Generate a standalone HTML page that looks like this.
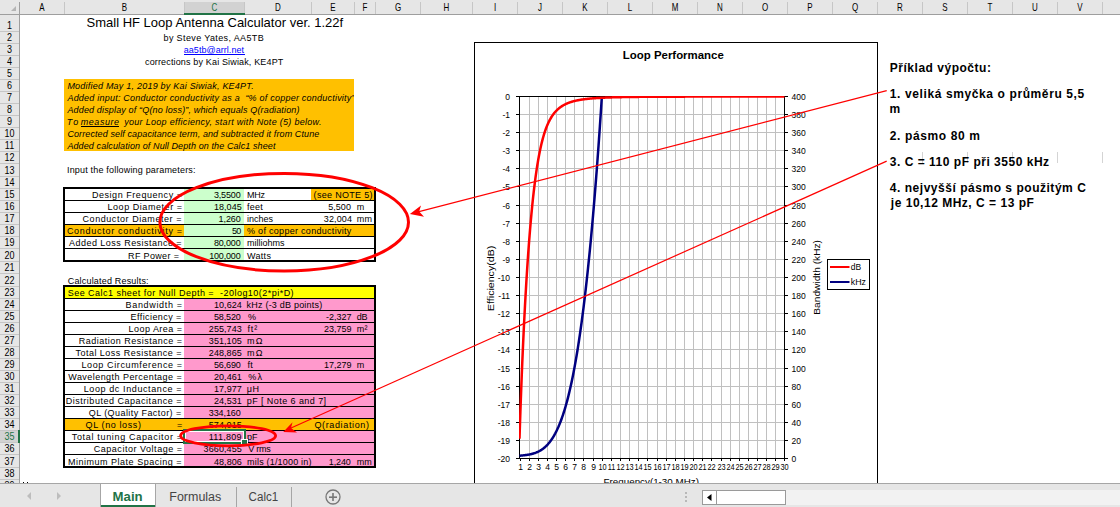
<!DOCTYPE html>
<html><head><meta charset="utf-8"><style>
html,body{margin:0;padding:0;}
body{width:1120px;height:507px;overflow:hidden;position:relative;background:#fff;font-family:"Liberation Sans",sans-serif;}
svg{position:absolute;left:0;top:0;}
svg text{font-family:"Liberation Sans",sans-serif;white-space:pre;}
#tabs{position:absolute;left:0;top:483px;width:1120px;height:24px;background:#E6E6E6;border-top:1px solid #A6A6A6;box-sizing:border-box;}
</style></head><body>
<svg width="1120" height="507" viewBox="0 0 1120 507">
<rect x="64" y="79" width="290" height="72" fill="#FFC000"/>
<rect x="184" y="188" width="60" height="73" fill="#CCFFCC"/>
<rect x="311" y="188" width="64" height="12" fill="#FFC000"/>
<rect x="64" y="224" width="120" height="12" fill="#FFC000"/>
<rect x="244" y="224" width="131" height="12" fill="#FFC000"/>
<rect x="64" y="286" width="311" height="12" fill="#FFFF00"/>
<rect x="184" y="298" width="191" height="169" fill="#FF99CC"/>
<rect x="64" y="418" width="311" height="12" fill="#FFC000"/>
<rect x="63" y="200" width="313" height="1" fill="#000"/>
<rect x="63" y="212" width="313" height="1" fill="#000"/>
<rect x="63" y="224" width="313" height="1" fill="#000"/>
<rect x="63" y="236" width="313" height="1" fill="#000"/>
<rect x="63" y="248" width="313" height="1" fill="#000"/>
<rect x="63" y="187" width="313" height="2" fill="#000"/>
<rect x="63" y="260" width="313" height="2" fill="#000"/>
<rect x="63" y="187" width="2" height="75" fill="#000"/>
<rect x="374" y="187" width="2" height="75" fill="#000"/>
<rect x="63" y="298" width="313" height="1" fill="#000"/>
<rect x="63" y="310" width="313" height="1" fill="#000"/>
<rect x="63" y="322" width="313" height="1" fill="#000"/>
<rect x="63" y="334" width="313" height="1" fill="#000"/>
<rect x="63" y="346" width="313" height="1" fill="#000"/>
<rect x="63" y="358" width="313" height="1" fill="#000"/>
<rect x="63" y="370" width="313" height="1" fill="#000"/>
<rect x="63" y="382" width="313" height="1" fill="#000"/>
<rect x="63" y="394" width="313" height="1" fill="#000"/>
<rect x="63" y="406" width="313" height="1" fill="#000"/>
<rect x="63" y="418" width="313" height="1" fill="#000"/>
<rect x="63" y="430" width="313" height="1" fill="#000"/>
<rect x="63" y="442" width="313" height="1" fill="#000"/>
<rect x="63" y="454" width="313" height="1" fill="#000"/>
<rect x="63" y="285" width="313" height="2" fill="#000"/>
<rect x="63" y="466" width="313" height="2" fill="#000"/>
<rect x="63" y="285" width="2" height="183" fill="#000"/>
<rect x="374" y="285" width="2" height="183" fill="#000"/>
<text x="86.5" y="27.3" font-size="13" textLength="256.7" lengthAdjust="spacing" fill="#000">Small HF Loop Antenna Calculator ver. 1.22f</text>
<text x="163.5" y="41" font-size="9" textLength="100.2" lengthAdjust="spacing" fill="#000">by Steve Yates, AA5TB</text>
<text x="183.75" y="53" font-size="9" textLength="60.3" lengthAdjust="spacing" fill="#0000FF">aa5tb@arrl.net</text>
<rect x="184" y="54" width="61" height="1" fill="#0000FF"/>
<text x="145" y="65" font-size="9" textLength="138.3" lengthAdjust="spacing" fill="#000">corrections by Kai Siwiak, KE4PT</text>
<clipPath id="oc"><rect x="64" y="79" width="290" height="72"/></clipPath><g clip-path="url(#oc)">
<text x="67.4" y="88.5" font-size="9" textLength="186.3" lengthAdjust="spacing" font-style="italic" fill="#000">Modified May 1, 2019 by Kai Siwiak, KE4PT.</text>
<text x="67.4" y="100.5" font-size="9" textLength="287.1" lengthAdjust="spacing" font-style="italic" fill="#000">Added input: Conductor conductivity as a  “% of copper conductivity”</text>
<text x="67.4" y="112.5" font-size="9" textLength="232.1" lengthAdjust="spacing" font-style="italic" fill="#000">Added display of “Q(no loss)”, which equals Q(radiation)</text>
<text x="66.8" y="124.5" font-size="9" textLength="11.4" lengthAdjust="spacing" font-style="italic" fill="#000">To</text>
<text x="80.8" y="124.5" font-size="9" textLength="38.2" lengthAdjust="spacing" font-style="italic" fill="#000">measure</text>
<text x="124.2" y="124.5" font-size="9" textLength="197.2" lengthAdjust="spacing" font-style="italic" fill="#000">your Loop efficiency, start with Note (5) below.</text>
<text x="67.4" y="136.5" font-size="9" textLength="251.9" lengthAdjust="spacing" font-style="italic" fill="#000">Corrected self capacitance term, and subtracted it from Ctune</text>
<text x="67.4" y="148.5" font-size="9" textLength="208.0" lengthAdjust="spacing" font-style="italic" fill="#000">Added calculation of Null Depth on the Calc1 sheet</text>
</g>
<rect x="81" y="126" width="38" height="1" fill="#000"/>
<text x="67" y="173" font-size="9" textLength="128.5" lengthAdjust="spacing" fill="#000">Input the following parameters:</text>
<text x="91.9" y="198" font-size="9" textLength="90.1" lengthAdjust="spacing" fill="#000">Design Frequency =</text>
<text x="107.5" y="210" font-size="9" textLength="74.5" lengthAdjust="spacing" fill="#000">Loop Diameter =</text>
<text x="82.5" y="222" font-size="9" textLength="99.0" lengthAdjust="spacing" fill="#000">Conductor Diameter =</text>
<text x="66.9" y="234" font-size="9" textLength="115.2" lengthAdjust="spacing" fill="#000">Conductor conductivity =</text>
<text x="69" y="246" font-size="9" textLength="112.6" lengthAdjust="spacing" fill="#000">Added Loss Resistance =</text>
<text x="128.1" y="259" font-size="9" textLength="50.8" lengthAdjust="spacing" fill="#000">RF Power =</text>
<text x="213.9" y="198" font-size="9" textLength="26.8" lengthAdjust="spacing" fill="#000">3,5500</text>
<text x="213.9" y="210" font-size="9" textLength="27.8" lengthAdjust="spacing" fill="#000">18,045</text>
<text x="218.6" y="222" font-size="9" textLength="22.1" lengthAdjust="spacing" fill="#000">1,260</text>
<text x="232" y="234" font-size="9" textLength="9.2" lengthAdjust="spacing" fill="#000">50</text>
<text x="213.9" y="246" font-size="9" textLength="26.8" lengthAdjust="spacing" fill="#000">80,000</text>
<text x="209.2" y="259" font-size="9" textLength="31.5" lengthAdjust="spacing" fill="#000">100,000</text>
<text x="247" y="198" font-size="9" textLength="17.9" lengthAdjust="spacing" fill="#000">MHz</text>
<text x="247" y="210" font-size="9" textLength="15.8" lengthAdjust="spacing" fill="#000">feet</text>
<text x="247" y="222" font-size="9" textLength="26.0" lengthAdjust="spacing" fill="#000">inches</text>
<text x="247" y="234" font-size="9" textLength="104.3" lengthAdjust="spacing" fill="#000">% of copper conductivity</text>
<text x="247" y="246" font-size="9" textLength="37.4" lengthAdjust="spacing" fill="#000">milliohms</text>
<text x="247" y="259" font-size="9" textLength="23.9" lengthAdjust="spacing" fill="#000">Watts</text>
<text x="313.6" y="198" font-size="9" textLength="58.9" lengthAdjust="spacing" fill="#000">(see NOTE 5)</text>
<text x="328.2" y="210" font-size="9" textLength="22.7" lengthAdjust="spacing" fill="#000">5,500</text>
<text x="356.8" y="210" font-size="9" fill="#000">m</text>
<text x="323.75" y="222" font-size="9" textLength="28.2" lengthAdjust="spacing" fill="#000">32,004</text>
<text x="356.8" y="222" font-size="9" textLength="15.2" lengthAdjust="spacing" fill="#000">mm</text>
<text x="67.7" y="284" font-size="9" textLength="80.9" lengthAdjust="spacing" fill="#000">Calculated Results:</text>
<text x="67.7" y="296" font-size="9" textLength="225.9" lengthAdjust="spacing" fill="#000">See Calc1 sheet for Null Depth =  -20log10(2*pi*D)</text>
<text x="125.6" y="308" font-size="9" textLength="56.4" lengthAdjust="spacing" fill="#000">Bandwidth =</text>
<text x="130.6" y="320" font-size="9" textLength="50.7" lengthAdjust="spacing" fill="#000">Efficiency =</text>
<text x="128.5" y="332" font-size="9" textLength="53.5" lengthAdjust="spacing" fill="#000">Loop Area =</text>
<text x="78.75" y="344" font-size="9" textLength="103.3" lengthAdjust="spacing" fill="#000">Radiation Resistance =</text>
<text x="75.4" y="356" font-size="9" textLength="106.1" lengthAdjust="spacing" fill="#000">Total Loss Resistance =</text>
<text x="81.5" y="368" font-size="9" textLength="100.5" lengthAdjust="spacing" fill="#000">Loop Circumference =</text>
<text x="68.3" y="380" font-size="9" textLength="113.4" lengthAdjust="spacing" fill="#000">Wavelength Percentage =</text>
<text x="83.7" y="392" font-size="9" textLength="97.8" lengthAdjust="spacing" fill="#000">Loop dc Inductance =</text>
<text x="65.8" y="404" font-size="9" textLength="115.7" lengthAdjust="spacing" fill="#000">Distributed Capacitance =</text>
<text x="88.75" y="416" font-size="9" textLength="92.4" lengthAdjust="spacing" fill="#000">QL (Quality Factor) =</text>
<text x="71.75" y="440" font-size="9" textLength="110.3" lengthAdjust="spacing" fill="#000">Total tuning Capacitor =</text>
<text x="93.75" y="452" font-size="9" textLength="88.3" lengthAdjust="spacing" fill="#000">Capacitor Voltage =</text>
<text x="68" y="465" font-size="9" textLength="113.5" lengthAdjust="spacing" fill="#000">Minimum Plate Spacing =</text>
<text x="85.6" y="428" font-size="9" textLength="55.3" lengthAdjust="spacing" fill="#000">QL (no loss)</text>
<text x="176.9" y="428" font-size="9" fill="#000">=</text>
<text x="213.9" y="308" font-size="9" textLength="27.9" lengthAdjust="spacing" fill="#000">10,624</text>
<text x="213.9" y="320" font-size="9" textLength="26.9" lengthAdjust="spacing" fill="#000">58,520</text>
<text x="208.8" y="332" font-size="9" textLength="33.0" lengthAdjust="spacing" fill="#000">255,743</text>
<text x="208.8" y="344" font-size="9" textLength="33.0" lengthAdjust="spacing" fill="#000">351,105</text>
<text x="208.8" y="356" font-size="9" textLength="33.0" lengthAdjust="spacing" fill="#000">248,865</text>
<text x="213.9" y="368" font-size="9" textLength="26.9" lengthAdjust="spacing" fill="#000">56,690</text>
<text x="213.9" y="380" font-size="9" textLength="27.9" lengthAdjust="spacing" fill="#000">20,461</text>
<text x="213.9" y="392" font-size="9" textLength="27.9" lengthAdjust="spacing" fill="#000">17,977</text>
<text x="213.9" y="404" font-size="9" textLength="27.9" lengthAdjust="spacing" fill="#000">24,531</text>
<text x="208.7" y="416" font-size="9" textLength="32.1" lengthAdjust="spacing" fill="#000">334,160</text>
<text x="208.7" y="428" font-size="9" textLength="33.1" lengthAdjust="spacing" fill="#000">574,015</text>
<text x="208.7" y="440" font-size="9" textLength="32.8" lengthAdjust="spacing" fill="#000">111,809</text>
<text x="203.6" y="452" font-size="9" textLength="38.2" lengthAdjust="spacing" fill="#000">3660,455</text>
<text x="213.9" y="465" font-size="9" textLength="27.9" lengthAdjust="spacing" fill="#000">48,806</text>
<text x="246.6" y="308" font-size="9" textLength="75.6" lengthAdjust="spacing" fill="#000">kHz (-3 dB points)</text>
<text x="248" y="320" font-size="9" fill="#000">%</text>
<text x="247.4" y="332" font-size="9" textLength="9.9" lengthAdjust="spacing" fill="#000">ft²</text>
<text x="246.9" y="344" font-size="9" textLength="15.5" lengthAdjust="spacing" fill="#000">mΩ</text>
<text x="246.9" y="356" font-size="9" textLength="15.5" lengthAdjust="spacing" fill="#000">mΩ</text>
<text x="247.4" y="368" font-size="9" textLength="5.4" lengthAdjust="spacing" fill="#000">ft</text>
<text x="248.2" y="380" font-size="9" fill="#000">%</text>
<text x="257.5" y="380" font-size="9" fill="#000">λ</text>
<text x="246.7" y="392" font-size="9" textLength="12.4" lengthAdjust="spacing" fill="#000">μH</text>
<text x="246.7" y="404" font-size="9" textLength="79.4" lengthAdjust="spacing" fill="#000">pF [ Note 6 and 7]</text>
<text x="247.1" y="440" font-size="9" textLength="10.4" lengthAdjust="spacing" fill="#000">pF</text>
<text x="248.3" y="452" font-size="9" textLength="22.4" lengthAdjust="spacing" fill="#000">V rms</text>
<text x="247.1" y="465" font-size="9" textLength="64.4" lengthAdjust="spacing" fill="#000">mils (1/1000 in)</text>
<text x="325.9" y="320" font-size="9" textLength="25.7" lengthAdjust="spacing" fill="#000">-2,327</text>
<text x="356.8" y="320" font-size="9" textLength="10.7" lengthAdjust="spacing" fill="#000">dB</text>
<text x="324" y="332" font-size="9" textLength="27.6" lengthAdjust="spacing" fill="#000">23,759</text>
<text x="356.8" y="332" font-size="9" textLength="10.8" lengthAdjust="spacing" fill="#000">m²</text>
<text x="324" y="368" font-size="9" textLength="27.6" lengthAdjust="spacing" fill="#000">17,279</text>
<text x="356.8" y="368" font-size="9" fill="#000">m</text>
<text x="314.4" y="428" font-size="9" textLength="54.6" lengthAdjust="spacing" fill="#000">Q(radiation)</text>
<text x="328.8" y="465" font-size="9" textLength="22.0" lengthAdjust="spacing" fill="#000">1,240</text>
<text x="356.8" y="465" font-size="9" textLength="15.0" lengthAdjust="spacing" fill="#000">mm</text>
<rect x="922" y="152" width="1" height="11" fill="#D4D4D4"/>
<rect x="967" y="152" width="1" height="11" fill="#D4D4D4"/>
<rect x="1012" y="152" width="1" height="11" fill="#D4D4D4"/>
<rect x="1057" y="152" width="1" height="11" fill="#D4D4D4"/>
<rect x="1102" y="152" width="1" height="11" fill="#D4D4D4"/>
<text x="889.8" y="72" font-size="12" textLength="101.1" lengthAdjust="spacing" font-weight="bold" fill="#000">Příklad výpočtu:</text>
<text x="889.8" y="98" font-size="12" textLength="194.4" lengthAdjust="spacing" font-weight="bold" fill="#000">1. veliká smyčka o průměru 5,5</text>
<text x="889.6" y="113" font-size="12" font-weight="bold">m</text>
<text x="889.8" y="140" font-size="12" textLength="90.1" lengthAdjust="spacing" font-weight="bold" fill="#000">2. pásmo 80 m</text>
<text x="889.8" y="166" font-size="12" textLength="159.3" lengthAdjust="spacing" font-weight="bold" fill="#000">3. C = 110 pF při 3550 kHz</text>
<text x="889.8" y="192" font-size="12" textLength="196.0" lengthAdjust="spacing" font-weight="bold" fill="#000">4. nejvyšší pásmo s použitým C</text>
<text x="890.8" y="207" font-size="12" textLength="143.1" lengthAdjust="spacing" font-weight="bold" fill="#000">je 10,12 MHz, C = 13 pF</text>
<rect x="23" y="482" width="1" height="1" fill="#000"/><rect x="27" y="482" width="1" height="1" fill="#000"/>
<rect x="474.5" y="42.5" width="403" height="460" fill="#fff" stroke="#000" stroke-width="1"/>
<rect x="529" y="96" width="1" height="362" fill="#C0C0C0"/>
<rect x="538" y="96" width="1" height="362" fill="#C0C0C0"/>
<rect x="547" y="96" width="1" height="362" fill="#C0C0C0"/>
<rect x="556" y="96" width="1" height="362" fill="#C0C0C0"/>
<rect x="565" y="96" width="1" height="362" fill="#C0C0C0"/>
<rect x="574" y="96" width="1" height="362" fill="#C0C0C0"/>
<rect x="583" y="96" width="1" height="362" fill="#C0C0C0"/>
<rect x="593" y="96" width="1" height="362" fill="#C0C0C0"/>
<rect x="602" y="96" width="1" height="362" fill="#C0C0C0"/>
<rect x="611" y="96" width="1" height="362" fill="#C0C0C0"/>
<rect x="620" y="96" width="1" height="362" fill="#C0C0C0"/>
<rect x="629" y="96" width="1" height="362" fill="#C0C0C0"/>
<rect x="638" y="96" width="1" height="362" fill="#C0C0C0"/>
<rect x="647" y="96" width="1" height="362" fill="#C0C0C0"/>
<rect x="657" y="96" width="1" height="362" fill="#C0C0C0"/>
<rect x="666" y="96" width="1" height="362" fill="#C0C0C0"/>
<rect x="675" y="96" width="1" height="362" fill="#C0C0C0"/>
<rect x="684" y="96" width="1" height="362" fill="#C0C0C0"/>
<rect x="693" y="96" width="1" height="362" fill="#C0C0C0"/>
<rect x="702" y="96" width="1" height="362" fill="#C0C0C0"/>
<rect x="711" y="96" width="1" height="362" fill="#C0C0C0"/>
<rect x="721" y="96" width="1" height="362" fill="#C0C0C0"/>
<rect x="730" y="96" width="1" height="362" fill="#C0C0C0"/>
<rect x="739" y="96" width="1" height="362" fill="#C0C0C0"/>
<rect x="748" y="96" width="1" height="362" fill="#C0C0C0"/>
<rect x="757" y="96" width="1" height="362" fill="#C0C0C0"/>
<rect x="766" y="96" width="1" height="362" fill="#C0C0C0"/>
<rect x="775" y="96" width="1" height="362" fill="#C0C0C0"/>
<rect x="519" y="114" width="265" height="1" fill="#C0C0C0"/>
<rect x="519" y="132" width="265" height="1" fill="#C0C0C0"/>
<rect x="519" y="150" width="265" height="1" fill="#C0C0C0"/>
<rect x="519" y="168" width="265" height="1" fill="#C0C0C0"/>
<rect x="519" y="186" width="265" height="1" fill="#C0C0C0"/>
<rect x="519" y="205" width="265" height="1" fill="#C0C0C0"/>
<rect x="519" y="223" width="265" height="1" fill="#C0C0C0"/>
<rect x="519" y="241" width="265" height="1" fill="#C0C0C0"/>
<rect x="519" y="259" width="265" height="1" fill="#C0C0C0"/>
<rect x="519" y="277" width="265" height="1" fill="#C0C0C0"/>
<rect x="519" y="295" width="265" height="1" fill="#C0C0C0"/>
<rect x="519" y="313" width="265" height="1" fill="#C0C0C0"/>
<rect x="519" y="331" width="265" height="1" fill="#C0C0C0"/>
<rect x="519" y="349" width="265" height="1" fill="#C0C0C0"/>
<rect x="519" y="368" width="265" height="1" fill="#C0C0C0"/>
<rect x="519" y="386" width="265" height="1" fill="#C0C0C0"/>
<rect x="519" y="404" width="265" height="1" fill="#C0C0C0"/>
<rect x="519" y="422" width="265" height="1" fill="#C0C0C0"/>
<rect x="519" y="440" width="265" height="1" fill="#C0C0C0"/>
<rect x="519" y="96" width="266" height="1" fill="#000"/>
<rect x="519" y="96" width="1" height="363" fill="#000"/>
<rect x="784" y="96" width="1" height="363" fill="#000"/>
<rect x="519" y="458" width="266" height="1" fill="#000"/>
<rect x="516" y="96" width="3" height="1" fill="#000"/>
<rect x="785" y="96" width="3" height="1" fill="#000"/>
<text x="510" y="99.5" font-size="8.5" text-anchor="end">0</text>
<text x="791.5" y="99.5" font-size="8.5">400</text>
<rect x="516" y="114" width="3" height="1" fill="#000"/>
<rect x="785" y="114" width="3" height="1" fill="#000"/>
<text x="510" y="117.5" font-size="8.5" text-anchor="end">-1</text>
<text x="791.5" y="117.5" font-size="8.5">380</text>
<rect x="516" y="132" width="3" height="1" fill="#000"/>
<rect x="785" y="132" width="3" height="1" fill="#000"/>
<text x="510" y="135.5" font-size="8.5" text-anchor="end">-2</text>
<text x="791.5" y="135.5" font-size="8.5">360</text>
<rect x="516" y="150" width="3" height="1" fill="#000"/>
<rect x="785" y="150" width="3" height="1" fill="#000"/>
<text x="510" y="153.5" font-size="8.5" text-anchor="end">-3</text>
<text x="791.5" y="153.5" font-size="8.5">340</text>
<rect x="516" y="168" width="3" height="1" fill="#000"/>
<rect x="785" y="168" width="3" height="1" fill="#000"/>
<text x="510" y="171.5" font-size="8.5" text-anchor="end">-4</text>
<text x="791.5" y="171.5" font-size="8.5">320</text>
<rect x="516" y="186" width="3" height="1" fill="#000"/>
<rect x="785" y="186" width="3" height="1" fill="#000"/>
<text x="510" y="189.5" font-size="8.5" text-anchor="end">-5</text>
<text x="791.5" y="189.5" font-size="8.5">300</text>
<rect x="516" y="205" width="3" height="1" fill="#000"/>
<rect x="785" y="205" width="3" height="1" fill="#000"/>
<text x="510" y="208.5" font-size="8.5" text-anchor="end">-6</text>
<text x="791.5" y="208.5" font-size="8.5">280</text>
<rect x="516" y="223" width="3" height="1" fill="#000"/>
<rect x="785" y="223" width="3" height="1" fill="#000"/>
<text x="510" y="226.5" font-size="8.5" text-anchor="end">-7</text>
<text x="791.5" y="226.5" font-size="8.5">260</text>
<rect x="516" y="241" width="3" height="1" fill="#000"/>
<rect x="785" y="241" width="3" height="1" fill="#000"/>
<text x="510" y="244.5" font-size="8.5" text-anchor="end">-8</text>
<text x="791.5" y="244.5" font-size="8.5">240</text>
<rect x="516" y="259" width="3" height="1" fill="#000"/>
<rect x="785" y="259" width="3" height="1" fill="#000"/>
<text x="510" y="262.5" font-size="8.5" text-anchor="end">-9</text>
<text x="791.5" y="262.5" font-size="8.5">220</text>
<rect x="516" y="277" width="3" height="1" fill="#000"/>
<rect x="785" y="277" width="3" height="1" fill="#000"/>
<text x="510" y="280.5" font-size="8.5" text-anchor="end">-10</text>
<text x="791.5" y="280.5" font-size="8.5">200</text>
<rect x="516" y="295" width="3" height="1" fill="#000"/>
<rect x="785" y="295" width="3" height="1" fill="#000"/>
<text x="510" y="298.5" font-size="8.5" text-anchor="end">-11</text>
<text x="791.5" y="298.5" font-size="8.5">180</text>
<rect x="516" y="313" width="3" height="1" fill="#000"/>
<rect x="785" y="313" width="3" height="1" fill="#000"/>
<text x="510" y="316.5" font-size="8.5" text-anchor="end">-12</text>
<text x="791.5" y="316.5" font-size="8.5">160</text>
<rect x="516" y="331" width="3" height="1" fill="#000"/>
<rect x="785" y="331" width="3" height="1" fill="#000"/>
<text x="510" y="334.5" font-size="8.5" text-anchor="end">-13</text>
<text x="791.5" y="334.5" font-size="8.5">140</text>
<rect x="516" y="349" width="3" height="1" fill="#000"/>
<rect x="785" y="349" width="3" height="1" fill="#000"/>
<text x="510" y="352.5" font-size="8.5" text-anchor="end">-14</text>
<text x="791.5" y="352.5" font-size="8.5">120</text>
<rect x="516" y="368" width="3" height="1" fill="#000"/>
<rect x="785" y="368" width="3" height="1" fill="#000"/>
<text x="510" y="371.5" font-size="8.5" text-anchor="end">-15</text>
<text x="791.5" y="371.5" font-size="8.5">100</text>
<rect x="516" y="386" width="3" height="1" fill="#000"/>
<rect x="785" y="386" width="3" height="1" fill="#000"/>
<text x="510" y="389.5" font-size="8.5" text-anchor="end">-16</text>
<text x="791.5" y="389.5" font-size="8.5">80</text>
<rect x="516" y="404" width="3" height="1" fill="#000"/>
<rect x="785" y="404" width="3" height="1" fill="#000"/>
<text x="510" y="407.5" font-size="8.5" text-anchor="end">-17</text>
<text x="791.5" y="407.5" font-size="8.5">60</text>
<rect x="516" y="422" width="3" height="1" fill="#000"/>
<rect x="785" y="422" width="3" height="1" fill="#000"/>
<text x="510" y="425.5" font-size="8.5" text-anchor="end">-18</text>
<text x="791.5" y="425.5" font-size="8.5">40</text>
<rect x="516" y="440" width="3" height="1" fill="#000"/>
<rect x="785" y="440" width="3" height="1" fill="#000"/>
<text x="510" y="443.5" font-size="8.5" text-anchor="end">-19</text>
<text x="791.5" y="443.5" font-size="8.5">20</text>
<rect x="516" y="458" width="3" height="1" fill="#000"/>
<rect x="785" y="458" width="3" height="1" fill="#000"/>
<text x="510" y="461.5" font-size="8.5" text-anchor="end">-20</text>
<text x="791.5" y="461.5" font-size="8.5">0</text>
<rect x="520" y="458" width="1" height="3" fill="#000"/>
<text transform="translate(520.5,470) scale(0.95,1)" font-size="9" text-anchor="middle">1</text>
<rect x="529" y="458" width="1" height="3" fill="#000"/>
<text transform="translate(529.5,470) scale(0.95,1)" font-size="9" text-anchor="middle">2</text>
<rect x="538" y="458" width="1" height="3" fill="#000"/>
<text transform="translate(538.5,470) scale(0.95,1)" font-size="9" text-anchor="middle">3</text>
<rect x="547" y="458" width="1" height="3" fill="#000"/>
<text transform="translate(547.5,470) scale(0.95,1)" font-size="9" text-anchor="middle">4</text>
<rect x="556" y="458" width="1" height="3" fill="#000"/>
<text transform="translate(556.5,470) scale(0.95,1)" font-size="9" text-anchor="middle">5</text>
<rect x="565" y="458" width="1" height="3" fill="#000"/>
<text transform="translate(565.5,470) scale(0.95,1)" font-size="9" text-anchor="middle">6</text>
<rect x="574" y="458" width="1" height="3" fill="#000"/>
<text transform="translate(574.5,470) scale(0.95,1)" font-size="9" text-anchor="middle">7</text>
<rect x="583" y="458" width="1" height="3" fill="#000"/>
<text transform="translate(583.5,470) scale(0.95,1)" font-size="9" text-anchor="middle">8</text>
<rect x="593" y="458" width="1" height="3" fill="#000"/>
<text transform="translate(593.5,470) scale(0.95,1)" font-size="9" text-anchor="middle">9</text>
<rect x="602" y="458" width="1" height="3" fill="#000"/>
<text transform="translate(602.5,470) scale(0.82,1)" font-size="9" text-anchor="middle">10</text>
<rect x="611" y="458" width="1" height="3" fill="#000"/>
<text transform="translate(611.5,470) scale(0.82,1)" font-size="9" text-anchor="middle">11</text>
<rect x="620" y="458" width="1" height="3" fill="#000"/>
<text transform="translate(620.5,470) scale(0.82,1)" font-size="9" text-anchor="middle">12</text>
<rect x="629" y="458" width="1" height="3" fill="#000"/>
<text transform="translate(629.5,470) scale(0.82,1)" font-size="9" text-anchor="middle">13</text>
<rect x="638" y="458" width="1" height="3" fill="#000"/>
<text transform="translate(638.5,470) scale(0.82,1)" font-size="9" text-anchor="middle">14</text>
<rect x="647" y="458" width="1" height="3" fill="#000"/>
<text transform="translate(647.5,470) scale(0.82,1)" font-size="9" text-anchor="middle">15</text>
<rect x="657" y="458" width="1" height="3" fill="#000"/>
<text transform="translate(657.5,470) scale(0.82,1)" font-size="9" text-anchor="middle">16</text>
<rect x="666" y="458" width="1" height="3" fill="#000"/>
<text transform="translate(666.5,470) scale(0.82,1)" font-size="9" text-anchor="middle">17</text>
<rect x="675" y="458" width="1" height="3" fill="#000"/>
<text transform="translate(675.5,470) scale(0.82,1)" font-size="9" text-anchor="middle">18</text>
<rect x="684" y="458" width="1" height="3" fill="#000"/>
<text transform="translate(684.5,470) scale(0.82,1)" font-size="9" text-anchor="middle">19</text>
<rect x="693" y="458" width="1" height="3" fill="#000"/>
<text transform="translate(693.5,470) scale(0.82,1)" font-size="9" text-anchor="middle">20</text>
<rect x="702" y="458" width="1" height="3" fill="#000"/>
<text transform="translate(702.5,470) scale(0.82,1)" font-size="9" text-anchor="middle">21</text>
<rect x="711" y="458" width="1" height="3" fill="#000"/>
<text transform="translate(711.5,470) scale(0.82,1)" font-size="9" text-anchor="middle">22</text>
<rect x="721" y="458" width="1" height="3" fill="#000"/>
<text transform="translate(721.5,470) scale(0.82,1)" font-size="9" text-anchor="middle">23</text>
<rect x="730" y="458" width="1" height="3" fill="#000"/>
<text transform="translate(730.5,470) scale(0.82,1)" font-size="9" text-anchor="middle">24</text>
<rect x="739" y="458" width="1" height="3" fill="#000"/>
<text transform="translate(739.5,470) scale(0.82,1)" font-size="9" text-anchor="middle">25</text>
<rect x="748" y="458" width="1" height="3" fill="#000"/>
<text transform="translate(748.5,470) scale(0.82,1)" font-size="9" text-anchor="middle">26</text>
<rect x="757" y="458" width="1" height="3" fill="#000"/>
<text transform="translate(757.5,470) scale(0.82,1)" font-size="9" text-anchor="middle">27</text>
<rect x="766" y="458" width="1" height="3" fill="#000"/>
<text transform="translate(766.5,470) scale(0.82,1)" font-size="9" text-anchor="middle">28</text>
<rect x="775" y="458" width="1" height="3" fill="#000"/>
<text transform="translate(775.5,470) scale(0.82,1)" font-size="9" text-anchor="middle">29</text>
<rect x="784" y="458" width="1" height="3" fill="#000"/>
<text transform="translate(784.5,470) scale(0.82,1)" font-size="9" text-anchor="middle">30</text>
<text x="603.6" y="484.5" font-size="9.5" textLength="95.3" lengthAdjust="spacingAndGlyphs">Frequency(1-30 MHz)</text>
<text x="622.8" y="59" font-size="11" font-weight="bold" textLength="101" lengthAdjust="spacingAndGlyphs">Loop Performance</text>
<text transform="translate(494,311) rotate(-90)" font-size="9.5" textLength="65.3" lengthAdjust="spacingAndGlyphs">Efficiency(dB)</text>
<text transform="translate(820,314.7) rotate(-90)" font-size="9.5" textLength="74.7" lengthAdjust="spacingAndGlyphs">Bandwidth (kHz)</text>
<clipPath id="pc"><rect x="519" y="96" width="266" height="363"/></clipPath><g clip-path="url(#pc)">
<polyline points="519.50,455.75 519.96,455.70 520.41,455.66 520.87,455.62 521.33,455.57 521.78,455.53 522.24,455.48 522.70,455.43 523.16,455.38 523.61,455.33 524.07,455.28 524.53,455.23 524.98,455.17 525.44,455.11 525.90,455.05 526.35,454.99 526.81,454.92 527.27,454.85 527.72,454.78 528.18,454.70 528.64,454.62 529.09,454.54 529.55,454.45 530.01,454.36 530.47,454.26 530.92,454.16 531.38,454.05 531.84,453.94 532.29,453.82 532.75,453.69 533.21,453.56 533.66,453.43 534.12,453.28 534.58,453.13 535.03,452.98 535.49,452.81 535.95,452.64 536.41,452.46 536.86,452.27 537.32,452.07 537.78,451.86 538.23,451.64 538.69,451.42 539.15,451.18 539.60,450.93 540.06,450.68 540.52,450.41 540.97,450.13 541.43,449.84 541.89,449.53 542.34,449.22 542.80,448.89 543.26,448.54 543.72,448.19 544.17,447.82 544.63,447.43 545.09,447.03 545.54,446.62 546.00,446.19 546.46,445.74 546.91,445.28 547.37,444.80 547.83,444.30 548.28,443.78 548.74,443.25 549.20,442.70 549.66,442.13 550.11,441.54 550.57,440.93 551.03,440.30 551.48,439.65 551.94,438.97 552.40,438.28 552.85,437.56 553.31,436.82 553.77,436.05 554.22,435.27 554.68,434.45 555.14,433.62 555.59,432.75 556.05,431.87 556.51,430.95 556.97,430.01 557.42,429.04 557.88,428.04 558.34,427.02 558.79,425.96 559.25,424.87 559.71,423.76 560.16,422.61 560.62,421.43 561.08,420.22 561.53,418.98 561.99,417.70 562.45,416.40 562.91,415.05 563.36,413.67 563.82,412.26 564.28,410.80 564.73,409.32 565.19,407.79 565.65,406.23 566.10,404.62 566.56,402.98 567.02,401.30 567.47,399.57 567.93,397.81 568.39,396.00 568.84,394.15 569.30,392.26 569.76,390.32 570.22,388.34 570.67,386.31 571.13,384.24 571.59,382.12 572.04,379.95 572.50,377.73 572.96,375.46 573.41,373.15 573.87,370.78 574.33,368.36 574.78,365.89 575.24,363.37 575.70,360.80 576.16,358.16 576.61,355.48 577.07,352.74 577.53,349.94 577.98,347.08 578.44,344.17 578.90,341.20 579.35,338.17 579.81,335.07 580.27,331.92 580.72,328.70 581.18,325.43 581.64,322.08 582.09,318.68 582.55,315.20 583.01,311.66 583.47,308.06 583.92,304.38 584.38,300.64 584.84,296.83 585.29,292.94 585.75,288.99 586.21,284.96 586.66,280.86 587.12,276.69 587.58,272.44 588.03,268.11 588.49,263.71 588.95,259.23 589.41,254.67 589.86,250.04 590.32,245.32 590.78,240.52 591.23,235.64 591.69,230.67 592.15,225.62 592.60,220.49 593.06,215.27 593.52,209.96 593.97,204.57 594.43,199.08 594.89,193.51 595.34,187.84 595.80,182.09 596.26,176.24 596.72,170.29 597.17,164.26 597.63,158.12 598.09,151.89 598.54,145.56 599.00,139.13 599.46,132.61 599.91,125.98 600.37,119.25 600.83,112.41 601.28,105.47 601.74,98.43" fill="none" stroke="#000080" stroke-width="2.5" stroke-linejoin="round"/>
<polyline points="519.50,438.70 519.96,424.58 520.41,411.16 520.87,398.39 521.33,386.22 521.78,374.59 522.24,363.48 522.70,352.84 523.16,342.65 523.61,332.89 524.07,323.51 524.53,314.52 524.98,305.87 525.44,297.57 525.90,289.58 526.35,281.91 526.81,274.53 527.27,267.43 527.72,260.59 528.18,254.02 528.64,247.70 529.09,241.63 529.55,235.78 530.01,230.16 530.47,224.75 530.92,219.56 531.38,214.56 531.84,209.76 532.29,205.15 532.75,200.73 533.21,196.48 533.66,192.40 534.12,188.48 534.58,184.73 535.03,181.12 535.49,177.67 535.95,174.36 536.41,171.18 536.86,168.14 537.32,165.23 537.78,162.44 538.23,159.77 538.69,157.21 539.15,154.76 539.60,152.42 540.06,150.18 540.52,148.03 540.97,145.98 541.43,144.01 541.89,142.13 542.34,140.34 542.80,138.62 543.26,136.97 543.72,135.40 544.17,133.90 544.63,132.46 545.09,131.08 545.54,129.76 546.00,128.50 546.46,127.30 546.91,126.15 547.37,125.04 547.83,123.99 548.28,122.97 548.74,122.01 549.20,121.08 549.66,120.19 550.11,119.34 550.57,118.53 551.03,117.75 551.48,117.00 551.94,116.29 552.40,115.60 552.85,114.94 553.31,114.31 553.77,113.70 554.22,113.12 554.68,112.57 555.14,112.03 555.59,111.52 556.05,111.02 556.51,110.55 556.97,110.10 557.42,109.66 557.88,109.24 558.34,108.84 558.79,108.45 559.25,108.07 559.71,107.72 560.16,107.37 560.62,107.04 561.08,106.72 561.53,106.41 561.99,106.11 562.45,105.83 562.91,105.55 563.36,105.29 563.82,105.03 564.28,104.78 564.73,104.55 565.19,104.32 565.65,104.10 566.10,103.88 566.56,103.68 567.02,103.48 567.47,103.28 567.93,103.10 568.39,102.92 568.84,102.75 569.30,102.58 569.76,102.42 570.22,102.26 570.67,102.11 571.13,101.96 571.59,101.82 572.04,101.68 572.50,101.55 572.96,101.42 573.41,101.30 573.87,101.18 574.33,101.06 574.78,100.95 575.24,100.84 575.70,100.73 576.16,100.63 576.61,100.53 577.07,100.43 577.53,100.34 577.98,100.25 578.44,100.16 578.90,100.07 579.35,99.99 579.81,99.91 580.27,99.83 580.72,99.76 581.18,99.68 581.64,99.61 582.09,99.54 582.55,99.47 583.01,99.41 583.47,99.34 583.92,99.28 584.38,99.22 584.84,99.16 585.29,99.10 585.75,99.05 586.21,98.99 586.66,98.94 587.12,98.89 587.58,98.84 588.03,98.79 588.49,98.74 588.95,98.70 589.41,98.65 589.86,98.61 590.32,98.57 590.78,98.52 591.23,98.48 591.69,98.44 592.15,98.41 592.60,98.37 593.06,98.33 593.52,98.30 593.97,98.26 594.43,98.23 594.89,98.19 595.34,98.16 595.80,98.13 596.26,98.10 596.72,98.07 597.17,98.04 597.63,98.01 598.09,97.98 598.54,97.96 599.00,97.93 599.46,97.90 599.91,97.88 600.37,97.85 600.83,97.83 601.28,97.80 601.74,97.78 602.20,97.76 602.66,97.74 603.11,97.72 603.57,97.69 604.03,97.67 604.48,97.65 604.94,97.63 605.40,97.61 605.85,97.59 606.31,97.58 606.77,97.56 607.22,97.54 607.68,97.52 608.14,97.51 608.59,97.49 609.05,97.47 609.51,97.46 609.97,97.44 610.42,97.43 610.88,97.41 611.34,97.40 611.79,97.38 612.25,97.37 612.71,97.35 613.16,97.34 613.62,97.33 614.08,97.31 614.53,97.30 614.99,97.29 615.45,97.28 615.91,97.26 616.36,97.25 616.82,97.24 617.28,97.23 617.73,97.22 618.19,97.21 618.65,97.20 619.10,97.19 619.56,97.18 620.02,97.17 620.47,97.16 620.93,97.15 621.39,97.14 621.84,97.13 622.30,97.12 622.76,97.11 623.22,97.10 623.67,97.09 624.13,97.08 624.59,97.08 625.04,97.07 625.50,97.06 625.96,97.05 626.41,97.04 626.87,97.04 627.33,97.03 627.78,97.02 628.24,97.01 628.70,97.01 629.16,97.00 629.61,96.99 630.07,96.99 630.53,96.98 630.98,96.97 631.44,96.97 631.90,96.96 632.35,96.95 632.81,96.95 633.27,96.94 633.72,96.94 634.18,96.93 634.64,96.93 635.09,96.92 635.55,96.91 636.01,96.91 636.47,96.90 636.92,96.90 637.38,96.89 637.84,96.89 638.29,96.88 638.75,96.88 639.21,96.87 639.66,96.87 640.12,96.86 640.58,96.86 641.03,96.86 641.49,96.85 641.95,96.85 642.41,96.84 642.86,96.84 643.32,96.83 643.78,96.83 644.23,96.83 644.69,96.82 645.15,96.82 645.60,96.81 646.06,96.81 646.52,96.81 646.97,96.80 647.43,96.80 647.89,96.80 648.34,96.79 648.80,96.79 649.26,96.79 649.72,96.78 650.17,96.78 650.63,96.78 651.09,96.77 651.54,96.77 652.00,96.77 652.46,96.76 652.91,96.76 653.37,96.76 653.83,96.75 654.28,96.75 654.74,96.75 655.20,96.75 655.66,96.74 656.11,96.74 656.57,96.74 657.03,96.73 657.48,96.73 657.94,96.73 658.40,96.73 658.85,96.72 659.31,96.72 659.77,96.72 660.22,96.72 660.68,96.72 661.14,96.71 661.59,96.71 662.05,96.71 662.51,96.71 662.97,96.70 663.42,96.70 663.88,96.70 664.34,96.70 664.79,96.70 665.25,96.69 665.71,96.69 666.16,96.69 666.62,96.69 667.08,96.69 667.53,96.68 667.99,96.68 668.45,96.68 668.91,96.68 669.36,96.68 669.82,96.67 670.28,96.67 670.73,96.67 671.19,96.67 671.65,96.67 672.10,96.67 672.56,96.66 673.02,96.66 673.47,96.66 673.93,96.66 674.39,96.66 674.84,96.66 675.30,96.65 675.76,96.65 676.22,96.65 676.67,96.65 677.13,96.65 677.59,96.65 678.04,96.65 678.50,96.64 678.96,96.64 679.41,96.64 679.87,96.64 680.33,96.64 680.78,96.64 681.24,96.64 681.70,96.63 682.16,96.63 682.61,96.63 683.07,96.63 683.53,96.63 683.98,96.63 684.44,96.63 684.90,96.63 685.35,96.62 685.81,96.62 686.27,96.62 686.72,96.62 687.18,96.62 687.64,96.62 688.09,96.62 688.55,96.62 689.01,96.62 689.47,96.61 689.92,96.61 690.38,96.61 690.84,96.61 691.29,96.61 691.75,96.61 692.21,96.61 692.66,96.61 693.12,96.61 693.58,96.61 694.03,96.60 694.49,96.60 694.95,96.60 695.41,96.60 695.86,96.60 696.32,96.60 696.78,96.60 697.23,96.60 697.69,96.60 698.15,96.60 698.60,96.60 699.06,96.60 699.52,96.59 699.97,96.59 700.43,96.59 700.89,96.59 701.34,96.59 701.80,96.59 702.26,96.59 702.72,96.59 703.17,96.59 703.63,96.59 704.09,96.59 704.54,96.59 705.00,96.59 705.46,96.58 705.91,96.58 706.37,96.58 706.83,96.58 707.28,96.58 707.74,96.58 708.20,96.58 708.66,96.58 709.11,96.58 709.57,96.58 710.03,96.58 710.48,96.58 710.94,96.58 711.40,96.58 711.85,96.58 712.31,96.57 712.77,96.57 713.22,96.57 713.68,96.57 714.14,96.57 714.59,96.57 715.05,96.57 715.51,96.57 715.97,96.57 716.42,96.57 716.88,96.57 717.34,96.57 717.79,96.57 718.25,96.57 718.71,96.57 719.16,96.57 719.62,96.57 720.08,96.57 720.53,96.56 720.99,96.56 721.45,96.56 721.91,96.56 722.36,96.56 722.82,96.56 723.28,96.56 723.73,96.56 724.19,96.56 724.65,96.56 725.10,96.56 725.56,96.56 726.02,96.56 726.47,96.56 726.93,96.56 727.39,96.56 727.84,96.56 728.30,96.56 728.76,96.56 729.22,96.56 729.67,96.56 730.13,96.56 730.59,96.55 731.04,96.55 731.50,96.55 731.96,96.55 732.41,96.55 732.87,96.55 733.33,96.55 733.78,96.55 734.24,96.55 734.70,96.55 735.16,96.55 735.61,96.55 736.07,96.55 736.53,96.55 736.98,96.55 737.44,96.55 737.90,96.55 738.35,96.55 738.81,96.55 739.27,96.55 739.72,96.55 740.18,96.55 740.64,96.55 741.09,96.55 741.55,96.55 742.01,96.55 742.47,96.55 742.92,96.55 743.38,96.54 743.84,96.54 744.29,96.54 744.75,96.54 745.21,96.54 745.66,96.54 746.12,96.54 746.58,96.54 747.03,96.54 747.49,96.54 747.95,96.54 748.41,96.54 748.86,96.54 749.32,96.54 749.78,96.54 750.23,96.54 750.69,96.54 751.15,96.54 751.60,96.54 752.06,96.54 752.52,96.54 752.97,96.54 753.43,96.54 753.89,96.54 754.34,96.54 754.80,96.54 755.26,96.54 755.72,96.54 756.17,96.54 756.63,96.54 757.09,96.54 757.54,96.54 758.00,96.54 758.46,96.54 758.91,96.54 759.37,96.54 759.83,96.54 760.28,96.53 760.74,96.53 761.20,96.53 761.66,96.53 762.11,96.53 762.57,96.53 763.03,96.53 763.48,96.53 763.94,96.53 764.40,96.53 764.85,96.53 765.31,96.53 765.77,96.53 766.22,96.53 766.68,96.53 767.14,96.53 767.59,96.53 768.05,96.53 768.51,96.53 768.97,96.53 769.42,96.53 769.88,96.53 770.34,96.53 770.79,96.53 771.25,96.53 771.71,96.53 772.16,96.53 772.62,96.53 773.08,96.53 773.53,96.53 773.99,96.53 774.45,96.53 774.91,96.53 775.36,96.53 775.82,96.53 776.28,96.53 776.73,96.53 777.19,96.53 777.65,96.53 778.10,96.53 778.56,96.53 779.02,96.53 779.47,96.53 779.93,96.53 780.39,96.53 780.84,96.53 781.30,96.53 781.76,96.53 782.22,96.53 782.67,96.53 783.13,96.53 783.59,96.53 784.04,96.53 784.50,96.53" fill="none" stroke="#FF0000" stroke-width="2.5" stroke-linejoin="round"/>
</g>
<rect x="827.5" y="259.5" width="42" height="30" fill="#fff" stroke="#000" stroke-width="1"/>
<rect x="830" y="266" width="19.5" height="2" fill="#FF0000"/>
<rect x="830" y="281" width="19.5" height="2" fill="#000080"/>
<text x="850.8" y="270" font-size="8.5" textLength="10.4" lengthAdjust="spacingAndGlyphs">dB</text>
<text x="850.8" y="285" font-size="8.5" textLength="15.2" lengthAdjust="spacingAndGlyphs">kHz</text>
<rect x="185" y="431" width="1" height="11" fill="#fff"/>
<rect x="185" y="431" width="58" height="1" fill="#fff"/>
<rect x="243" y="431" width="1" height="9" fill="#fff"/>
<rect x="185" y="441" width="56" height="1" fill="#fff"/>
<rect x="183" y="429" width="2" height="15" fill="#217346"/>
<rect x="183" y="429" width="63" height="2" fill="#217346"/>
<rect x="244" y="429" width="2" height="11" fill="#217346"/>
<rect x="183" y="442" width="58" height="2" fill="#217346"/>
<rect x="241" y="439" width="7" height="7" fill="#fff"/>
<rect x="242" y="440" width="5" height="5" fill="#217346"/>
<ellipse cx="284.2" cy="222.2" rx="124.3" ry="48.8" fill="none" stroke="#FF0000" stroke-width="3"/>
<ellipse cx="228.1" cy="435.8" rx="47.5" ry="10" fill="none" stroke="#FF0000" stroke-width="2.8"/>
<line x1="886.7" y1="90.7" x2="419" y2="211.6" stroke="#FF0000" stroke-width="1.2"/>
<polygon points="409.9,214 421,205.6 419.2,211.5 424,216.8" fill="#FF0000"/>
<line x1="886.7" y1="161.1" x2="291" y2="428" stroke="#FF0000" stroke-width="1.2"/>
<polygon points="283.2,432.1 292.5,422.3 291,427.9 297,432.6" fill="#FF0000"/>
<rect x="0" y="0" width="1120" height="14" fill="#E6E6E6"/>
<rect x="0" y="14" width="19" height="469" fill="#E6E6E6"/>
<rect x="64" y="2" width="1" height="12" fill="#C6C6C6"/>
<text transform="translate(42.0,11) scale(0.8,1)" font-size="10" text-anchor="middle" fill="#000">A</text>
<rect x="184" y="2" width="1" height="12" fill="#C6C6C6"/>
<text transform="translate(124.5,11) scale(0.8,1)" font-size="10" text-anchor="middle" fill="#000">B</text>
<rect x="185" y="2" width="59" height="12" fill="#D2D2D2"/>
<rect x="184" y="2" width="1" height="12" fill="#C6C6C6"/>
<rect x="244" y="2" width="1" height="12" fill="#C6C6C6"/>
<text transform="translate(214.5,11) scale(0.8,1)" font-size="10" text-anchor="middle" fill="#217346">C</text>
<rect x="311" y="2" width="1" height="12" fill="#C6C6C6"/>
<text transform="translate(278.0,11) scale(0.8,1)" font-size="10" text-anchor="middle" fill="#000">D</text>
<rect x="354" y="2" width="1" height="12" fill="#C6C6C6"/>
<text transform="translate(333.0,11) scale(0.8,1)" font-size="10" text-anchor="middle" fill="#000">E</text>
<rect x="375" y="2" width="1" height="12" fill="#C6C6C6"/>
<text transform="translate(365.0,11) scale(0.8,1)" font-size="10" text-anchor="middle" fill="#000">F</text>
<rect x="420" y="2" width="1" height="12" fill="#C6C6C6"/>
<text transform="translate(398.0,11) scale(0.8,1)" font-size="10" text-anchor="middle" fill="#000">G</text>
<rect x="472" y="2" width="1" height="12" fill="#C6C6C6"/>
<text transform="translate(446.5,11) scale(0.8,1)" font-size="10" text-anchor="middle" fill="#000">H</text>
<rect x="517" y="2" width="1" height="12" fill="#C6C6C6"/>
<text transform="translate(495.0,11) scale(0.8,1)" font-size="10" text-anchor="middle" fill="#000">I</text>
<rect x="562" y="2" width="1" height="12" fill="#C6C6C6"/>
<text transform="translate(540.0,11) scale(0.8,1)" font-size="10" text-anchor="middle" fill="#000">J</text>
<rect x="607" y="2" width="1" height="12" fill="#C6C6C6"/>
<text transform="translate(585.0,11) scale(0.8,1)" font-size="10" text-anchor="middle" fill="#000">K</text>
<rect x="652" y="2" width="1" height="12" fill="#C6C6C6"/>
<text transform="translate(630.0,11) scale(0.8,1)" font-size="10" text-anchor="middle" fill="#000">L</text>
<rect x="697" y="2" width="1" height="12" fill="#C6C6C6"/>
<text transform="translate(675.0,11) scale(0.8,1)" font-size="10" text-anchor="middle" fill="#000">M</text>
<rect x="742" y="2" width="1" height="12" fill="#C6C6C6"/>
<text transform="translate(720.0,11) scale(0.8,1)" font-size="10" text-anchor="middle" fill="#000">N</text>
<rect x="787" y="2" width="1" height="12" fill="#C6C6C6"/>
<text transform="translate(765.0,11) scale(0.8,1)" font-size="10" text-anchor="middle" fill="#000">O</text>
<rect x="832" y="2" width="1" height="12" fill="#C6C6C6"/>
<text transform="translate(810.0,11) scale(0.8,1)" font-size="10" text-anchor="middle" fill="#000">P</text>
<rect x="877" y="2" width="1" height="12" fill="#C6C6C6"/>
<text transform="translate(855.0,11) scale(0.8,1)" font-size="10" text-anchor="middle" fill="#000">Q</text>
<rect x="922" y="2" width="1" height="12" fill="#C6C6C6"/>
<text transform="translate(900.0,11) scale(0.8,1)" font-size="10" text-anchor="middle" fill="#000">R</text>
<rect x="967" y="2" width="1" height="12" fill="#C6C6C6"/>
<text transform="translate(945.0,11) scale(0.8,1)" font-size="10" text-anchor="middle" fill="#000">S</text>
<rect x="1012" y="2" width="1" height="12" fill="#C6C6C6"/>
<text transform="translate(990.0,11) scale(0.8,1)" font-size="10" text-anchor="middle" fill="#000">T</text>
<rect x="1057" y="2" width="1" height="12" fill="#C6C6C6"/>
<text transform="translate(1035.0,11) scale(0.8,1)" font-size="10" text-anchor="middle" fill="#000">U</text>
<rect x="1102" y="2" width="1" height="12" fill="#C6C6C6"/>
<text transform="translate(1080.0,11) scale(0.8,1)" font-size="10" text-anchor="middle" fill="#000">V</text>
<rect x="1147" y="2" width="1" height="12" fill="#C6C6C6"/>
<text transform="translate(1125.0,11) scale(0.8,1)" font-size="10" text-anchor="middle" fill="#000">W</text>
<rect x="0" y="31" width="19" height="1" fill="#C6C6C6"/>
<text transform="translate(9.5,29) scale(0.9,1)" font-size="10" text-anchor="middle" fill="#000">1</text>
<rect x="0" y="43" width="19" height="1" fill="#C6C6C6"/>
<text transform="translate(9.5,41) scale(0.9,1)" font-size="10" text-anchor="middle" fill="#000">2</text>
<rect x="0" y="55" width="19" height="1" fill="#C6C6C6"/>
<text transform="translate(9.5,53) scale(0.9,1)" font-size="10" text-anchor="middle" fill="#000">3</text>
<rect x="0" y="67" width="19" height="1" fill="#C6C6C6"/>
<text transform="translate(9.5,65) scale(0.9,1)" font-size="10" text-anchor="middle" fill="#000">4</text>
<rect x="0" y="79" width="19" height="1" fill="#C6C6C6"/>
<text transform="translate(9.5,77) scale(0.9,1)" font-size="10" text-anchor="middle" fill="#000">5</text>
<rect x="0" y="91" width="19" height="1" fill="#C6C6C6"/>
<text transform="translate(9.5,89) scale(0.9,1)" font-size="10" text-anchor="middle" fill="#000">6</text>
<rect x="0" y="103" width="19" height="1" fill="#C6C6C6"/>
<text transform="translate(9.5,101) scale(0.9,1)" font-size="10" text-anchor="middle" fill="#000">7</text>
<rect x="0" y="115" width="19" height="1" fill="#C6C6C6"/>
<text transform="translate(9.5,113) scale(0.9,1)" font-size="10" text-anchor="middle" fill="#000">8</text>
<rect x="0" y="127" width="19" height="1" fill="#C6C6C6"/>
<text transform="translate(9.5,125) scale(0.9,1)" font-size="10" text-anchor="middle" fill="#000">9</text>
<rect x="0" y="139" width="19" height="1" fill="#C6C6C6"/>
<text transform="translate(9.5,137) scale(0.9,1)" font-size="10" text-anchor="middle" fill="#000">10</text>
<rect x="0" y="151" width="19" height="1" fill="#C6C6C6"/>
<text transform="translate(9.5,149) scale(0.9,1)" font-size="10" text-anchor="middle" fill="#000">11</text>
<rect x="0" y="163" width="19" height="1" fill="#C6C6C6"/>
<text transform="translate(9.5,161) scale(0.9,1)" font-size="10" text-anchor="middle" fill="#000">12</text>
<rect x="0" y="176" width="19" height="1" fill="#C6C6C6"/>
<text transform="translate(9.5,174) scale(0.9,1)" font-size="10" text-anchor="middle" fill="#000">13</text>
<rect x="0" y="188" width="19" height="1" fill="#C6C6C6"/>
<text transform="translate(9.5,186) scale(0.9,1)" font-size="10" text-anchor="middle" fill="#000">14</text>
<rect x="0" y="200" width="19" height="1" fill="#C6C6C6"/>
<text transform="translate(9.5,198) scale(0.9,1)" font-size="10" text-anchor="middle" fill="#000">15</text>
<rect x="0" y="212" width="19" height="1" fill="#C6C6C6"/>
<text transform="translate(9.5,210) scale(0.9,1)" font-size="10" text-anchor="middle" fill="#000">16</text>
<rect x="0" y="224" width="19" height="1" fill="#C6C6C6"/>
<text transform="translate(9.5,222) scale(0.9,1)" font-size="10" text-anchor="middle" fill="#000">17</text>
<rect x="0" y="236" width="19" height="1" fill="#C6C6C6"/>
<text transform="translate(9.5,234) scale(0.9,1)" font-size="10" text-anchor="middle" fill="#000">18</text>
<rect x="0" y="248" width="19" height="1" fill="#C6C6C6"/>
<text transform="translate(9.5,246) scale(0.9,1)" font-size="10" text-anchor="middle" fill="#000">19</text>
<rect x="0" y="261" width="19" height="1" fill="#C6C6C6"/>
<text transform="translate(9.5,259) scale(0.9,1)" font-size="10" text-anchor="middle" fill="#000">20</text>
<rect x="0" y="273" width="19" height="1" fill="#C6C6C6"/>
<text transform="translate(9.5,271) scale(0.9,1)" font-size="10" text-anchor="middle" fill="#000">21</text>
<rect x="0" y="286" width="19" height="1" fill="#C6C6C6"/>
<text transform="translate(9.5,284) scale(0.9,1)" font-size="10" text-anchor="middle" fill="#000">22</text>
<rect x="0" y="298" width="19" height="1" fill="#C6C6C6"/>
<text transform="translate(9.5,296) scale(0.9,1)" font-size="10" text-anchor="middle" fill="#000">23</text>
<rect x="0" y="310" width="19" height="1" fill="#C6C6C6"/>
<text transform="translate(9.5,308) scale(0.9,1)" font-size="10" text-anchor="middle" fill="#000">24</text>
<rect x="0" y="322" width="19" height="1" fill="#C6C6C6"/>
<text transform="translate(9.5,320) scale(0.9,1)" font-size="10" text-anchor="middle" fill="#000">25</text>
<rect x="0" y="334" width="19" height="1" fill="#C6C6C6"/>
<text transform="translate(9.5,332) scale(0.9,1)" font-size="10" text-anchor="middle" fill="#000">26</text>
<rect x="0" y="346" width="19" height="1" fill="#C6C6C6"/>
<text transform="translate(9.5,344) scale(0.9,1)" font-size="10" text-anchor="middle" fill="#000">27</text>
<rect x="0" y="358" width="19" height="1" fill="#C6C6C6"/>
<text transform="translate(9.5,356) scale(0.9,1)" font-size="10" text-anchor="middle" fill="#000">28</text>
<rect x="0" y="370" width="19" height="1" fill="#C6C6C6"/>
<text transform="translate(9.5,368) scale(0.9,1)" font-size="10" text-anchor="middle" fill="#000">29</text>
<rect x="0" y="382" width="19" height="1" fill="#C6C6C6"/>
<text transform="translate(9.5,380) scale(0.9,1)" font-size="10" text-anchor="middle" fill="#000">30</text>
<rect x="0" y="394" width="19" height="1" fill="#C6C6C6"/>
<text transform="translate(9.5,392) scale(0.9,1)" font-size="10" text-anchor="middle" fill="#000">31</text>
<rect x="0" y="406" width="19" height="1" fill="#C6C6C6"/>
<text transform="translate(9.5,404) scale(0.9,1)" font-size="10" text-anchor="middle" fill="#000">32</text>
<rect x="0" y="418" width="19" height="1" fill="#C6C6C6"/>
<text transform="translate(9.5,416) scale(0.9,1)" font-size="10" text-anchor="middle" fill="#000">33</text>
<rect x="0" y="430" width="19" height="1" fill="#C6C6C6"/>
<text transform="translate(9.5,428) scale(0.9,1)" font-size="10" text-anchor="middle" fill="#000">34</text>
<rect x="0" y="431" width="19" height="11" fill="#D2D2D2"/>
<rect x="0" y="442" width="19" height="1" fill="#C6C6C6"/>
<text transform="translate(9.5,440) scale(0.9,1)" font-size="10" text-anchor="middle" fill="#217346">35</text>
<rect x="0" y="454" width="19" height="1" fill="#C6C6C6"/>
<text transform="translate(9.5,452) scale(0.9,1)" font-size="10" text-anchor="middle" fill="#000">36</text>
<rect x="0" y="467" width="19" height="1" fill="#C6C6C6"/>
<text transform="translate(9.5,465) scale(0.9,1)" font-size="10" text-anchor="middle" fill="#000">37</text>
<rect x="0" y="479" width="19" height="1" fill="#C6C6C6"/>
<text transform="translate(9.5,477) scale(0.9,1)" font-size="10" text-anchor="middle" fill="#000">38</text>
<rect x="0" y="491" width="19" height="1" fill="#C6C6C6"/>
<text transform="translate(9.5,489) scale(0.9,1)" font-size="10" text-anchor="middle" fill="#000">39</text>
<rect x="0" y="14" width="1120" height="1" fill="#9E9E9E"/>
<rect x="19" y="2" width="1" height="481" fill="#9E9E9E"/>
<polygon points="16,6 16,11 11,11" fill="#B4B4B4"/>
<rect x="18" y="430" width="2" height="13" fill="#217346"/>
<rect x="184" y="13" width="61" height="2" fill="#217346"/>
</svg>
<div id="tabs">
  <svg width="1120" height="24" style="position:absolute;left:0;top:-1px">
    <polygon points="31,492 31,500 27,496" fill="#BDBDBD" transform="translate(0,-483)"/>
    <polygon points="57,492 57,500 61,496" fill="#BDBDBD" transform="translate(0,-483)"/>
    <rect x="100.5" y="0.5" width="55" height="24" fill="#fff" stroke="#A6A6A6" stroke-width="1"/>
    <rect x="101" y="22" width="54" height="2" fill="#217346"/>
    <text x="112.6" y="18" font-size="13" font-weight="bold" fill="#217346" textLength="30" lengthAdjust="spacingAndGlyphs">Main</text>
    <text x="169.3" y="17.5" font-size="12.5" fill="#444" textLength="52" lengthAdjust="spacingAndGlyphs">Formulas</text>
    <rect x="236" y="4" width="1" height="20" fill="#A6A6A6"/>
    <text x="248.6" y="17.5" font-size="12.5" fill="#444" textLength="29.6" lengthAdjust="spacingAndGlyphs">Calc1</text>
    <rect x="291" y="4" width="1" height="20" fill="#A6A6A6"/>
    <circle cx="333" cy="14" r="7" fill="none" stroke="#777" stroke-width="1.3"/>
    <rect x="329" y="13.4" width="8" height="1.6" fill="#777"/>
    <rect x="332.2" y="10" width="1.6" height="8" fill="#777"/>
    <rect x="685" y="9" width="2" height="2" fill="#B8B8B8"/>
    <rect x="685" y="13" width="2" height="2" fill="#B8B8B8"/>
    <rect x="685" y="17" width="2" height="2" fill="#B8B8B8"/>
    <rect x="786" y="7" width="334" height="15" fill="#F2F2F2"/>
    <rect x="702.5" y="7.5" width="83" height="14" fill="#fff" stroke="#9A9A9A" stroke-width="1"/>
    <rect x="716" y="8" width="1" height="13" fill="#9A9A9A"/>
    <polygon points="711.5,11 711.5,18 707,14.5" fill="#000"/>
  </svg>
</div>
</body></html>
